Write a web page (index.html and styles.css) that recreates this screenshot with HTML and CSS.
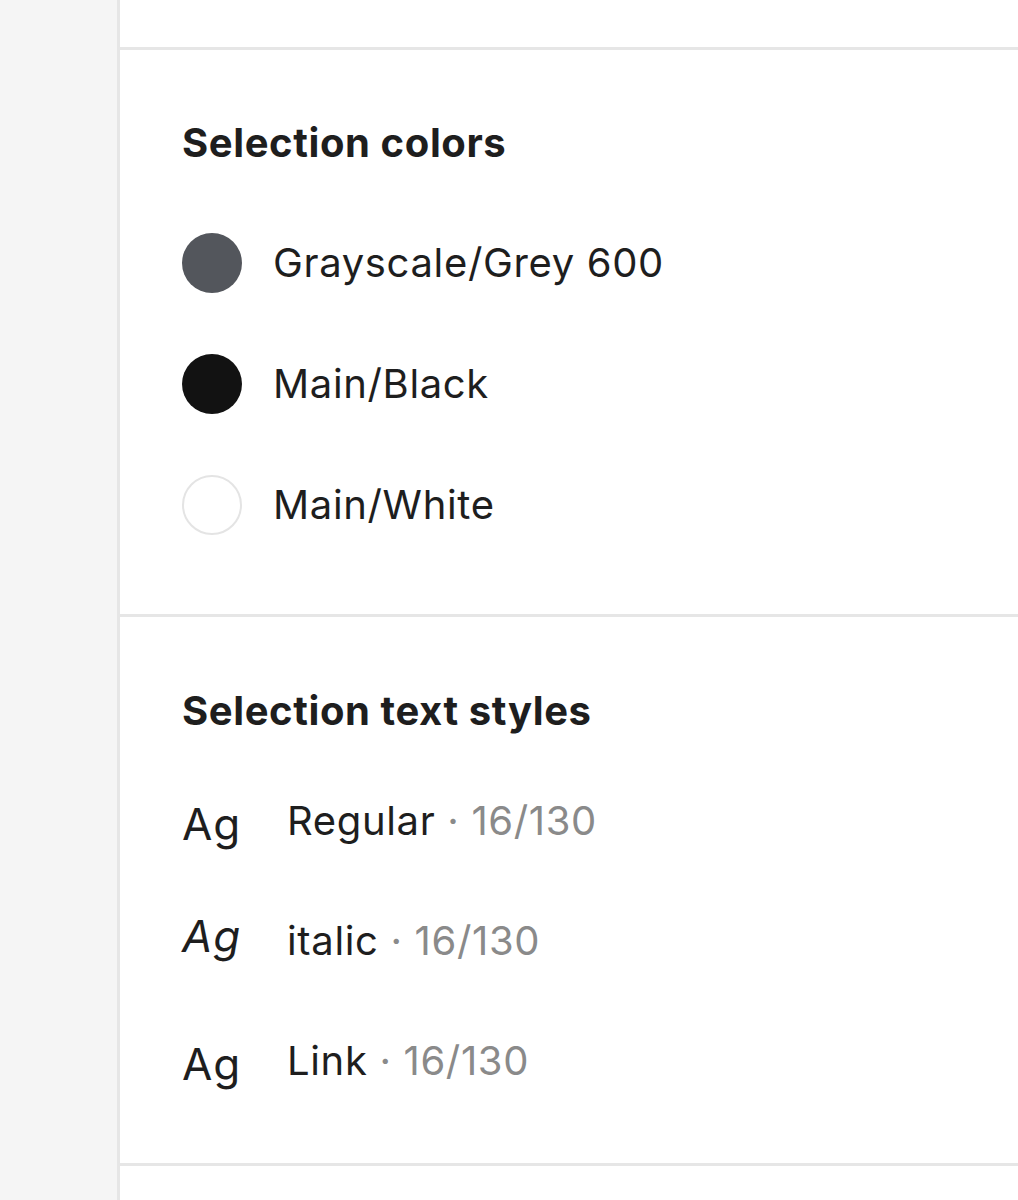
FILE: index.html
```html
<!DOCTYPE html>
<html lang="en">
<head>
<meta charset="utf-8">
<title>Selection styles</title>
<link rel="stylesheet" href="styles.css">
</head>
<body>
<div class="app">
  <aside class="sidebar"></aside>
  <main class="panel">
    <section class="section section-top"></section>
    <section class="section section-colors">
      <h2 class="heading">Selection colors</h2>
      <ul class="list">
        <li class="row"><span class="swatch swatch-grey"></span><span class="label">Grayscale/Grey 600</span></li>
        <li class="row"><span class="swatch swatch-black"></span><span class="label">Main/Black</span></li>
        <li class="row"><span class="swatch swatch-white"></span><span class="label">Main/White</span></li>
      </ul>
    </section>
    <section class="section section-text">
      <h2 class="heading">Selection text styles</h2>
      <ul class="list list-text">
        <li class="row text-row"><span class="ag">Ag</span><span class="label">Regular <span class="meta">· 16/130</span></span></li>
        <li class="row text-row"><span class="ag ag-italic">Ag</span><span class="label">italic <span class="meta">· 16/130</span></span></li>
        <li class="row text-row"><span class="ag">Ag</span><span class="label">Link <span class="meta">· 16/130</span></span></li>
      </ul>
    </section>
    <section class="section section-bottom"></section>
  </main>
</div>
</body>
</html>
```
FILE: styles.css
```css
* { box-sizing: border-box; }
html, body { margin: 0; padding: 0; background: #ffffff; }
body {
  font-family: Inter, "Noto Sans", "Liberation Sans", sans-serif;
  color: #1e1e1e;
}
.app {
  display: flex;
  min-height: 1200px;
}
.sidebar {
  width: 120px;
  flex: 0 0 120px;
  background: #f5f5f5;
  border-right: 3px solid #e6e6e6;
}
.panel {
  flex: 1;
  display: flex;
  flex-direction: column;
}
.section {
  border-bottom: 3px solid #e6e6e6;
  padding-left: 62px;
}
.section-top { height: 50px; }
.section-colors { height: 567px; padding-top: 32px; }
.section-text { height: 549px; padding-top: 33px; }
.section-bottom { flex: 1; border-bottom: none; }
.heading {
  margin: 0;
  height: 120px;
  display: flex;
  align-items: center;
  font-size: 40px;
  font-weight: 700;
  letter-spacing: 0.6px;
  color: #1e1e1e;
}
.list {
  list-style: none;
  margin: 0;
  padding: 0;
}
.list-text { margin-top: -10px; }
.row {
  height: 121px;
  display: flex;
  align-items: center;
  font-size: 40px;
  letter-spacing: 0.65px;
}
.text-row { height: 120px; }
.swatch {
  width: 60px;
  height: 60px;
  border-radius: 50%;
  flex: 0 0 60px;
  margin-right: 31px;
}
.swatch-grey { background: #53565c; }
.swatch-black { background: #121212; }
.swatch-white { background: #ffffff; border: 2px solid #e4e4e4; }
.label { color: #1e1e1e; }
.meta { color: #8a8a8a; }
.ag {
  width: 105px;
  flex: 0 0 105px;
  font-size: 44px;
  letter-spacing: 1px;
  color: #1e1e1e;
  position: relative;
  top: 4px;
}
.ag-italic { font-style: italic; top: -4px; }
```
